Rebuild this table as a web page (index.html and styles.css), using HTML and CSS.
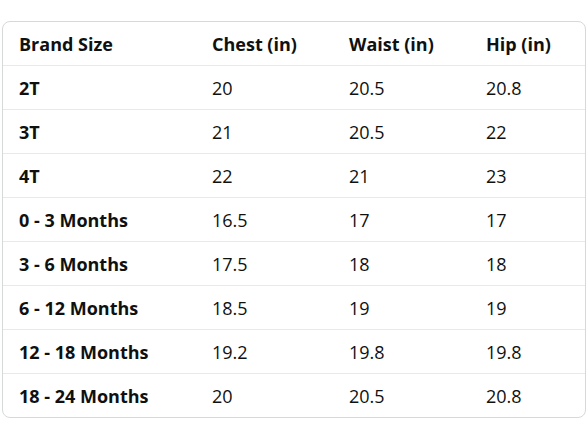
FILE: index.html
```html
<!DOCTYPE html>
<html lang="en">
<head>
    <meta charset="UTF-8">
    <title>Size Chart</title>
    <link rel="stylesheet" href="styles.css">
</head>
<body>
    <div class="card">
        <table class="size-table">
            <colgroup>
                <col class="col-size">
                <col class="col-mid">
                <col class="col-mid">
                <col>
            </colgroup>
            <thead>
                <tr>
                    <th>Brand Size</th>
                    <th>Chest (in)</th>
                    <th>Waist (in)</th>
                    <th>Hip (in)</th>
                </tr>
            </thead>
            <tbody>
                <tr><th>2T</th><td>20</td><td>20.5</td><td>20.8</td></tr>
                <tr><th>3T</th><td>21</td><td>20.5</td><td>22</td></tr>
                <tr><th>4T</th><td>22</td><td>21</td><td>23</td></tr>
                <tr><th>0 - 3 Months</th><td>16.5</td><td>17</td><td>17</td></tr>
                <tr><th>3 - 6 Months</th><td>17.5</td><td>18</td><td>18</td></tr>
                <tr><th>6 - 12 Months</th><td>18.5</td><td>19</td><td>19</td></tr>
                <tr><th>12 - 18 Months</th><td>19.2</td><td>19.8</td><td>19.8</td></tr>
                <tr><th>18 - 24 Months</th><td>20</td><td>20.5</td><td>20.8</td></tr>
            </tbody>
        </table>
    </div>
</body>
</html>
```

FILE: styles.css
```css
body {
    margin: 0;
    padding: 21px 2px 0 2px;
    background: #ffffff;
    font-family: "Open Sans", "Noto Sans", Arial, sans-serif;
    color: #0f1111;
}

.card {
    width: 582px;
    border: 1px solid #d5d9d9;
    border-radius: 8px;
    overflow: hidden;
}

.size-table {
    width: 100%;
    border-collapse: collapse;
    table-layout: fixed;
    font-size: 18px;
}

.col-size { width: 193px; }
.col-mid { width: 137px; }

.size-table th,
.size-table td {
    height: 43px;
    padding: 0 0 0 16px;
    text-align: left;
    vertical-align: middle;
    white-space: nowrap;
    border-top: 1px solid #e7e9ec;
}

.size-table thead th {
    border-top: none;
}

.size-table th {
    font-weight: 700;
}

.size-table td {
    font-weight: 400;
}
```
